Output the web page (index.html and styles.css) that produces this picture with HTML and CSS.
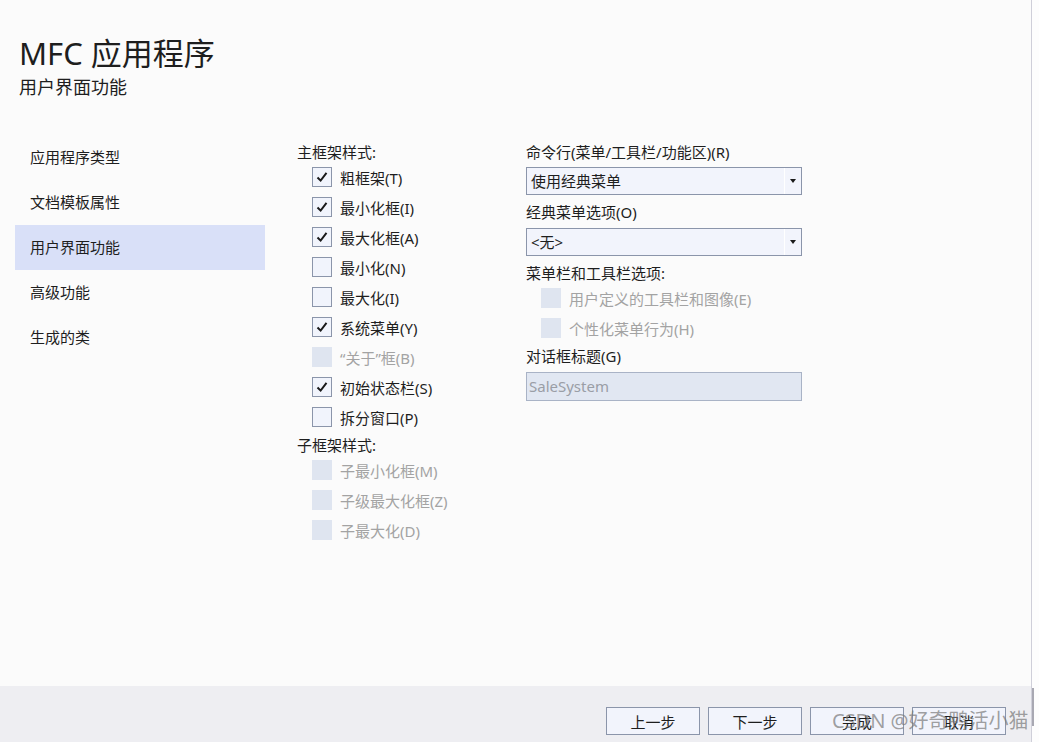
FILE: index.html
```html
<!DOCTYPE html>
<html lang="zh-CN">
<head>
    <meta charset="UTF-8">
    <meta name="viewport" content="width=device-width, initial-scale=1.0">
    <title>MFC 应用程序</title>
    <link rel="stylesheet" href="styles.css">
</head>
<body>
    <div class="window">
        <div class="page">
            <header class="head">
                <h1>MFC 应用程序</h1>
                <p>用户界面功能</p>
            </header>

            <div class="content">
                <nav class="steps">
                    <a class="step">应用程序类型</a>
                    <a class="step">文档模板属性</a>
                    <a class="step active">用户界面功能</a>
                    <a class="step">高级功能</a>
                    <a class="step">生成的类</a>
                </nav>

                <section class="col frame-col">
                    <div class="label">主框架样式:</div>
                    <div class="check on"><span class="box"><svg viewBox="0 0 20 20"><path d="M5 10.5 L8.5 14 L15 5.5"/></svg></span>粗框架(T)</div>
                    <div class="check on"><span class="box"><svg viewBox="0 0 20 20"><path d="M5 10.5 L8.5 14 L15 5.5"/></svg></span>最小化框(I)</div>
                    <div class="check on"><span class="box"><svg viewBox="0 0 20 20"><path d="M5 10.5 L8.5 14 L15 5.5"/></svg></span>最大化框(A)</div>
                    <div class="check"><span class="box"></span>最小化(N)</div>
                    <div class="check"><span class="box"></span>最大化(I)</div>
                    <div class="check on"><span class="box"><svg viewBox="0 0 20 20"><path d="M5 10.5 L8.5 14 L15 5.5"/></svg></span>系统菜单(Y)</div>
                    <div class="check off"><span class="box"></span>“关于”框(B)</div>
                    <div class="check on"><span class="box"><svg viewBox="0 0 20 20"><path d="M5 10.5 L8.5 14 L15 5.5"/></svg></span>初始状态栏(S)</div>
                    <div class="check"><span class="box"></span>拆分窗口(P)</div>
                    <div class="label sub">子框架样式:</div>
                    <div class="check off"><span class="box"></span>子最小化框(M)</div>
                    <div class="check off"><span class="box"></span>子级最大化框(Z)</div>
                    <div class="check off"><span class="box"></span>子最大化(D)</div>
                </section>

                <section class="col menu-col">
                    <div class="label">命令行(菜单/工具栏/功能区)(R)</div>
                    <div class="select"><span class="value">使用经典菜单</span><span class="arrow"></span></div>
                    <div class="label gap">经典菜单选项(O)</div>
                    <div class="select second"><span class="value">&lt;无&gt;</span><span class="arrow"></span></div>
                    <div class="label gap">菜单栏和工具栏选项:</div>
                    <div class="check off"><span class="box"></span>用户定义的工具栏和图像(E)</div>
                    <div class="check off"><span class="box"></span>个性化菜单行为(H)</div>
                    <div class="label tight">对话框标题(G)</div>
                    <div class="textbox">SaleSystem</div>
                </section>
            </div>
        </div>

        <footer class="foot">
            <button class="btn">上一步</button>
            <button class="btn">下一步</button>
            <button class="btn">完成</button>
            <button class="btn">取消</button>
        </footer>
        <span class="grip"></span>
        <span class="watermark">CSDN @好奇鸭活小猫</span>
    </div>
</body>
</html>
```

FILE: styles.css
```css
body {
    margin: 0;
    padding: 0;
    background-color: #fdfdfd;
    font-family: "Noto Sans", "Noto Sans CJK SC", sans-serif;
    color: #1e1e1e;
    font-size: 15px;
}
.window {
    position: relative;
    width: 1031px;
    height: 742px;
    border-right: 1px solid #cfcfd9;
    background-color: #fbfbfb;
    display: flex;
    flex-direction: column;
}
.page {
    flex: 1;
    padding-left: 19px;
}
.head {
    padding-top: 35px;
}
.head h1 {
    margin: 0;
    font-size: 31px;
    font-weight: 400;
    line-height: 36px;
}
.head p {
    margin: 4px 0 0;
    font-size: 18px;
    line-height: 24px;
}
.content {
    display: flex;
    margin-top: 36px;
}
.steps {
    display: flex;
    flex-direction: column;
    width: 250px;
    margin-left: -4px;
}
.step {
    height: 45px;
    line-height: 45px;
    padding-left: 15px;
    color: #1e1e1e;
    text-decoration: none;
}
.step.active {
    background-color: #d9e0f8;
}
.col {
    padding-top: 7px;
}
.frame-col {
    width: 229px;
    margin-left: 32px;
}
.menu-col {
    width: 276px;
}
.label {
    line-height: 20px;
    height: 20px;
}
.label.sub {
    margin-top: 3px;
}
.label.gap {
    margin-top: 7px;
}
.label.tight {
    margin-top: 3px;
}
.check {
    display: flex;
    align-items: center;
    height: 30px;
    padding-left: 15px;
    gap: 8px;
}
.box {
    width: 18px;
    height: 18px;
    border: 1px solid #8b95aa;
    background-color: #f1f4fc;
    display: flex;
}
.box svg {
    width: 18px;
    height: 18px;
}
.box path {
    fill: none;
    stroke: #1a1a1a;
    stroke-width: 2.2;
}
.check.off {
    color: #a3a3a3;
}
.check.off .box {
    border-color: transparent;
    background-color: #dfe5f0;
}
.select {
    display: flex;
    height: 26px;
    margin-top: 5px;
    border: 1px solid #8b95aa;
    background-color: #f2f4fc;
}
.select.second {
    margin-top: 6px;
}
.select .value {
    flex: 1;
    padding-left: 4px;
    line-height: 26px;
}
.select .arrow {
    width: 16px;
    border-left: 1px solid #ffffff;
    display: flex;
    align-items: center;
    justify-content: center;
}
.select .arrow::after {
    content: "";
    border-left: 3.5px solid transparent;
    border-right: 3.5px solid transparent;
    border-top: 4px solid #1a1a1a;
}
.textbox {
    margin-top: 6px;
    height: 27px;
    line-height: 27px;
    padding-left: 2px;
    border: 1px solid #a9b3c6;
    background-color: #e1e7f2;
    color: #9a9ea6;
}
.foot {
    height: 56px;
    background-color: #eeeef2;
    display: flex;
    justify-content: flex-end;
    align-items: flex-start;
    gap: 8px;
    padding: 21px 25px 0 0;
    box-sizing: border-box;
}
.btn {
    width: 94px;
    height: 28px;
    border: 1px solid #8b95aa;
    background-color: #f2f4fc;
    font-family: "Noto Sans", "Noto Sans CJK SC", sans-serif;
    font-size: 15px;
    color: #1e1e1e;
    padding: 0;
}
.grip {
    position: absolute;
    right: -3px;
    top: 688px;
    width: 2px;
    height: 38px;
    background-color: #a8a8b2;
}
.watermark {
    position: absolute;
    left: 832px;
    top: 706px;
    font-size: 20px;
    line-height: 30px;
    color: rgba(120, 120, 120, 0.7);
    white-space: nowrap;
    pointer-events: none;
}
```
